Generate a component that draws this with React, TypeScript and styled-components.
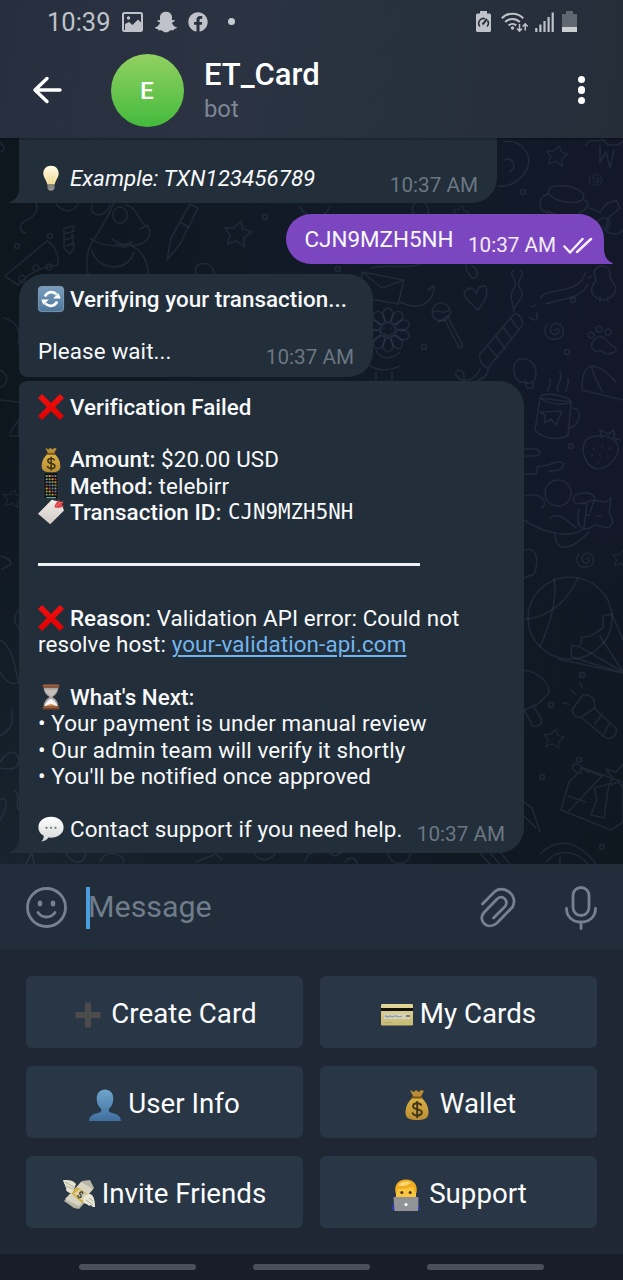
import React from "react";
import styled, { createGlobalStyle, css } from "styled-components";
import { FaSnapchatGhost, FaFacebook } from "react-icons/fa";

const Global = createGlobalStyle`
  * { box-sizing: border-box; }
  body { margin: 0; background: #1e2733; font-family: Roboto, "Liberation Sans", sans-serif; }
`;

const Screen = styled.div`
  width: 623px;
  height: 1280px;
  display: flex;
  flex-direction: column;
  overflow: hidden;
  color: #f7f9fb;
`;

/* ---------- header ---------- */

const Header = styled.header`
  height: 138px;
  flex: none;
  background: linear-gradient(100deg, #272f3e 0%, #2b3342 35%, #27313d 65%, #252d39 100%);
  box-shadow: 0 1px 2px rgba(0, 0, 0, 0.35);
  position: relative;
  z-index: 2;
`;

const StatusBar = styled.div`
  height: 42px;
  padding: 1px 46px 0 47px;
  display: flex;
  align-items: center;
  justify-content: space-between;
  color: #bfc3c9;
`;

const StatusGroup = styled.div<{ $gap: number }>`
  display: flex;
  align-items: center;
  gap: ${(p) => p.$gap}px;
  height: 40px;
`;

const Clock = styled.span`
  font-size: 25.5px;
  line-height: 40px;
`;

const StatusDot = styled.i`
  width: 7px;
  height: 7px;
  margin-left: 8px;
  border-radius: 50%;
  background: #c6c9ce;
`;

const TitleBar = styled.div`
  height: 96px;
  padding: 0 38px 0 32px;
  display: flex;
  align-items: center;
`;

const Avatar = styled.div`
  width: 73px;
  height: 73px;
  margin: 0 20.5px 0 48.5px;
  border-radius: 50%;
  background: linear-gradient(#93d162, #43ba3c);
  display: flex;
  align-items: center;
  justify-content: center;
  font-size: 24.5px;
  font-weight: 500;
  color: #fff;
`;

const TitleText = styled.div`
  flex: 1;
  display: flex;
  flex-direction: column;
  padding-top: 2px;
`;

const Title = styled.div`
  font-size: 31px;
  font-weight: 500;
  line-height: 35px;
  color: #fff;
`;

const Subtitle = styled.div`
  font-size: 23.8px;
  line-height: 34px;
  color: #7b8794;
`;

const MenuDots = styled.div`
  display: flex;
  flex-direction: column;
  gap: 3.5px;
  i { width: 7.2px; height: 7.2px; border-radius: 50%; background: #fff; }
`;

/* ---------- chat ---------- */

const Chat = styled.main`
  height: 726px;
  flex: none;
  position: relative;
  overflow: hidden;
  display: flex;
  flex-direction: column;
  align-items: flex-start;
  padding-left: 19px;
  background:
    radial-gradient(circle at 0% 100%, #17232e 0%, rgba(23, 35, 46, 0) 45%),
    radial-gradient(circle at 100% 100%, #0f181f 0%, rgba(15, 24, 31, 0) 40%),
    linear-gradient(90deg, #0e161e 0%, #111a26 45%, #121828 100%);
`;

const Wallpaper = styled.svg`
  position: absolute;
  inset: 0;
  fill: none;
  stroke: rgba(128, 142, 175, 0.14);
  stroke-width: 1.6;
  stroke-linecap: round;
  stroke-linejoin: round;
`;

const bubble = css`
  position: relative;
  font-size: 22.4px;
  line-height: 26.4px;
  white-space: nowrap;
`;

const Incoming = styled.article<{ $w: number; $h: number; $radius: string; $top?: number; $padTop: number }>`
  ${bubble}
  width: ${(p) => p.$w}px;
  height: ${(p) => p.$h}px;
  margin-top: ${(p) => p.$top ?? 0}px;
  padding: ${(p) => p.$padTop}px 19px 0;
  border-radius: ${(p) => p.$radius};
  background: #222e39;
`;

const Outgoing = styled.article`
  ${bubble}
  align-self: flex-end;
  display: flex;
  width: 318px;
  height: 50px;
  margin: 11px 19px 0 0;
  padding: 11.5px 12px 0 18.5px;
  border-radius: 25px 25px 0 25px;
  background: #7d46c1;
`;

const Tail = styled.svg<{ $side: "left" | "right" }>`
  position: absolute;
  bottom: 0;
  ${(p) => p.$side}: ${(p) => (p.$side === "left" ? -10 : -9)}px;
`;

const Line = styled.div<{ $spacing?: number }>`
  height: 26.4px;
  display: flex;
  align-items: center;
  white-space: pre;
  letter-spacing: ${(p) => p.$spacing ?? 0.11}px;
  b { font-weight: 500; letter-spacing: 0.03px; }
`;

const Blank = styled.div`
  height: 26.4px;
`;

const Italic = styled.em`
  font-style: italic;
  letter-spacing: 0;
`;

const Mono = styled.code`
  font-family: "DejaVu Sans Mono", "Liberation Mono", monospace;
  font-size: 20.8px;
  letter-spacing: 0;
  margin-left: 1px;
`;

const Link = styled.a`
  color: #72b5ee;
  text-decoration: underline;
  text-decoration-thickness: 1.5px;
  text-underline-offset: 3px;
`;

const Rule = styled.div`
  width: 382px;
  height: 3px;
  margin: 11px 0 12.4px;
  background: #eff2f5;
`;

const Stamp = styled.time<{ $bottom?: number }>`
  position: absolute;
  right: 19px;
  bottom: ${(p) => p.$bottom ?? 7}px;
  font-size: 20.7px;
  line-height: 24px;
  color: #6b7783;
`;

const SentStamp = styled.div`
  display: flex;
  align-items: center;
  gap: 7px;
  height: 26px;
  margin: 7px 0 0 14.5px;
  font-size: 20.7px;
  color: #f3ecfa;
`;

const EmojiSlot = styled.span<{ $size: number; $gap: number }>`
  display: inline-flex;
  flex: none;
  width: ${(p) => p.$size}px;
  height: ${(p) => p.$size}px;
  margin-right: ${(p) => p.$gap}px;
  svg { width: 100%; height: 100%; overflow: visible; }
`;

/* ---------- composer & keyboard ---------- */

const Composer = styled.div`
  height: 85px;
  flex: none;
  display: flex;
  align-items: center;
  padding: 2px 26px 0 25px;
  background: #212d3a;
  position: relative;
  z-index: 1;
`;

const Field = styled.div`
  flex: 1;
  margin-left: 18px;
  display: flex;
  align-items: center;
  color: #6f7c8b;
  font-size: 30.4px;
  line-height: 40px;
  span { margin: -2px 0 0 -1.5px; }
`;

const Caret = styled.i`
  width: 3.5px;
  height: 42px;
  background: #4b9fdc;
`;

const Keyboard = styled.div`
  height: 305px;
  flex: none;
  padding: 27px 26px 0;
  display: grid;
  grid-template-columns: 277px 277px;
  grid-auto-rows: 72px;
  gap: 18px 17px;
  background: #1e2733;
`;

const Key = styled.button`
  display: flex;
  align-items: center;
  justify-content: center;
  border: 0;
  padding: 2px 0 0;
  border-radius: 6px;
  background: #293645;
  color: #fafcfd;
  font: 400 27.7px Roboto, "Liberation Sans", sans-serif;
  ${EmojiSlot} { margin-top: 3px; }
`;

const NavBar = styled.div`
  flex: 1;
  display: flex;
  justify-content: center;
  align-items: center;
  gap: 57px;
  background: #171e28;
  i { width: 117px; height: 6px; border-radius: 3px; background: #49505a; }
`;

/* ---------- emoji drawings ---------- */

type EmojiName =
  | "bulb" | "refresh" | "cross" | "bag" | "phone" | "label" | "hourglass"
  | "speech" | "plus" | "card" | "user" | "wings" | "coder";

const drawings: Record<EmojiName, React.ReactNode> = {
  bulb: (
    <>
      <path d="M16 1c-6 0-9.500 4.300-9.500 9.500 0 4.500 3.500 7.500 5 13.500h9c1.500-6 5-9 5-13.500C25.500 5.300 22 1 16 1z" fill="url(#bulbG)" />
      <path d="M14.500 23l-1-10M17.500 23l1-10" stroke="#ecd88e" strokeWidth="0.800" fill="none" />
      <path d="M11.800 24h8.400v5l-2 2.500h-4.400l-2-2.500z" fill="#9b9a91" />
      <path d="M12 25.500h8M12 28h8" stroke="#6b6c66" strokeWidth="1" />
    </>
  ),
  refresh: (
    <>
      <rect x="0.500" y="0.500" width="31" height="31" rx="4" fill="url(#blueG)" stroke="#8da7bd" strokeWidth="1" />
      <path d="M8.500 13A8.600 8.600 0 0 1 23 10.500" stroke="#fff" strokeWidth="3.200" fill="none" />
      <path d="M23.500 19A8.600 8.600 0 0 1 9 21.500" stroke="#fff" strokeWidth="3.200" fill="none" />
      <path d="M28 15.500h-9.500l7-6.500zM4 16.500h9.500l-7 6.500z" fill="#fff" />
    </>
  ),
  cross: <path d="M0 5L5 0l11 11L27 0l5 5-11 11 11 11-5 5-11-11L5 32l-5-5 11-11z" fill="url(#redG)" />,
  bag: (
    <>
      <path d="M9 1l4 2 2-2 3 2 2-2 3 1-4 7h-6z" fill="#b98e34" />
      <path d="M12.500 8h7c5 4 8 9 8 15 0 6-3 8-11.500 8S4.500 29 4.500 23c0-6 3-11 8-15z" fill="url(#goldG)" />
      <path d="M11.500 8.500h9" stroke="#7b551a" strokeWidth="2.200" strokeLinecap="round" />
      <path d="M20.500 16.500c-.8-1.600-2.200-2.300-4.300-2.300-2.500 0-4.100 1.200-4.100 3.100 0 4.300 8.700 1.900 8.700 6 0 2-1.800 3.200-4.500 3.200-2.500 0-4.300-1-4.900-3M16.200 12v17" stroke="#3d3316" strokeWidth="1.900" fill="none" />
    </>
  ),
  phone: (
    <>
      <rect x="7.500" y="0" width="17" height="32" rx="2" fill="#07090a" stroke="#3d4446" strokeWidth="0.800" />
      {[0, 1, 2, 3, 4, 5, 6].map((r) =>
        [0, 1, 2, 3].map((c) => (
          <rect key={`${r}${c}`} x={9.4 + c * 3.6} y={2.6 + r * 3.8} width="2.600" height="2.400" rx="0.500"
            fill={["#7da04b", "#527da4", "#c79a4a", "#8b8f94", "#a8513c"][(r * 3 + c * 2) % 5]} />
        ))
      )}
      <path d="M10 30.300h12" stroke="#4fb3ab" strokeWidth="1.500" />
    </>
  ),
  label: (
    <>
      <path d="M17 1l11 3 4 10-17 17L0 18z" fill="url(#paperG)" />
      <circle cx="24.500" cy="8" r="3" fill="#b9aca2" />
      <path d="M20 10c1-4 3-6 6-9l1 3 5-1-3 4 3 2c-3 2-8 2-12 1z" fill="#df4548" />
      <path d="M22 9l7-6" stroke="#f08b8a" strokeWidth="1" />
    </>
  ),
  hourglass: (
    <>
      <path d="M7 4h18c0 6-3 9-7 12 4 3 7 6 7 12H7c0-6 3-9 7-12-4-3-7-6-7-12z" fill="#a9a6a3" />
      <path d="M8.500 7h15c-1.300 4-4.300 6-7.500 8.300C12.800 13 9.800 11 8.500 7z" fill="#c9bfba" />
      <path d="M16 18c3.500 2 7 5 7.500 9h-15c.5-4 4-7 7.500-9z" fill="#f8f6f4" />
      <path d="M11 26l5-1.500 5 1.500 2 2H9z" fill="#c98b53" />
      <rect x="5.500" y="0.500" width="21" height="4" rx="1.500" fill="#854c32" />
      <rect x="5.500" y="27.500" width="21" height="4" rx="1.500" fill="#774128" />
      <path d="M7 1.500h18M7 28.500h18" stroke="#bc7b55" strokeWidth="0.900" />
    </>
  ),
  speech: (
    <>
      <path d="M16 1C7 1 .5 6.300.5 14c0 4.500 2.300 8 6.500 10.300.2 2.700-.8 5.200-3 7.200 4-.5 7-2.500 9-5 10.700 1 18.500-4.500 18.500-12.500C31.500 6.300 25 1 16 1z" fill="url(#whiteG)" />
      <g fill="#73787b"><circle cx="10.500" cy="14.500" r="1.400" /><circle cx="16" cy="14.500" r="1.400" /><circle cx="21.500" cy="14.500" r="1.400" /></g>
    </>
  ),
  plus: <path d="M13 3.500h6v9.500h9.500v6H19v9.500h-6V19H3.500v-6H13z" fill="#4b4b4b" />,
  card: (
    <>
      <rect x="0" y="5" width="32" height="21.500" rx="1.300" fill="url(#cardG)" />
      <rect x="0" y="9" width="32" height="3" fill="#11120d" />
      <rect x="3" y="14.500" width="26" height="5.500" fill="#d6d2b8" />
      <path d="M4 17.500c2-2 2 2 4 0s2 1 4 0 3-1 5 0 3-1 4 0" stroke="#8199b7" strokeWidth="1.200" fill="none" />
      <path d="M25 17h4" stroke="#4a4944" strokeWidth="1.300" />
      <path d="M3 23.500h8" stroke="#b6ad76" strokeWidth="1" />
    </>
  ),
  user: (
    <path d="M16 .5c-5 0-8.300 3.700-8.300 9 0 5 2.300 8.700 4.500 10.500.7 3-1.500 3.500-5.200 4.500C3 25.500.3 27.500 0 32h32c-.3-4.500-3-6.500-7-7.500-3.700-1-5.900-1.500-5.200-4.500 2.200-1.800 4.500-5.500 4.500-10.500 0-5.300-3.300-9-8.300-9z" fill="url(#userG)" />
  ),
  wings: (
    <>
      <path d="M14 8l5-6 8-1 4 8-6 7-9-4z" fill="#b9b6a5" />
      <path d="M1 22l9-9 13 9-7 8-5-1z" fill="#b9b6a5" />
      <path d="M2 20L18 3l12 7-14 17z" fill="#d8d5c3" />
      <path d="M8 14l6-6 12 8-7 8z" fill="#cfae42" />
      <path d="M11 14.500l5-4 8 5-5 6z" fill="#dcd4b4" />
      <text x="17" y="19" fontSize="9.500" fontWeight="700" fill="#44422e" textAnchor="middle" transform="rotate(30 17 16)">$</text>
      <path d="M0 1c6 0 10 0 13 4-1 3-3 7-4 9-4 0-6-2-6-4 1 0 0-1-1-3 1 0-1-2-2-6z" fill="#e4e3d1" />
      <path d="M20 20c3-5 6-6 9-4 2 2 3 7 3 12-2 0-3 0-4-2-1 1-3 1-4-1-2 0-4-1-4-5z" fill="#e9e7d8" />
      <path d="M2 3l9 5M3 7l7 3M23 21l7 5M26 19l4 3" stroke="#aaa995" strokeWidth="0.900" />
    </>
  ),
  coder: (
    <>
      <path d="M2 31c0-5 1-8 6-9h15c5 1 7 4 7 9z" fill="#2b3aae" />
      <path d="M6 12c0-6 4-9 10-9s10 3 10 9v7H6z" fill="#f9c63d" />
      <path d="M5.500 14C4 6 8 .5 16 .5s12 5.500 10.500 13.500l-2-1c0-3-1-4.500-3-5.500-4 2.500-9 3-13 2-1.500 1-1.500 2.500-1.500 4z" fill="#f2ac22" />
      <path d="M8 6.500c3-4 9-5 13-3-3 3-8 4-13 3z" fill="#fbd875" />
      <circle cx="11.800" cy="13.500" r="1.500" fill="#4d3316" /><circle cx="20.200" cy="13.500" r="1.500" fill="#4d3316" />
      <path d="M4.500 18h23a1 1 0 0 1 1 1l-.5 13H4.500L3.500 19a1 1 0 0 1 1-1z" fill="#929397" />
      <circle cx="16" cy="25.500" r="1.600" fill="#fff" />
    </>
  ),
};

const gradients: [string, string, string][] = [
  ["bulbG", "#fffbe6", "#f0dc9a"],
  ["blueG", "#7a9dbd", "#4b779d"],
  ["redG", "#f01010", "#e00000"],
  ["goldG", "#ddb244", "#b98d34"],
  ["paperG", "#f1ece8", "#d2cac5"],
  ["whiteG", "#ffffff", "#d5d6d7"],
  ["cardG", "#e3d79a", "#c7b974"],
  ["userG", "#6ea5cb", "#406f9f"],
];

const Defs = styled.svg`
  position: absolute;
  width: 0;
  height: 0;
`;

const EmojiDefs = () => (
  <Defs>
    <defs>
      {gradients.map(([id, a, b]) => (
        <linearGradient key={id} id={id} x1="0" y1="0" x2="0" y2="1">
          <stop offset="0" stopColor={a} />
          <stop offset="1" stopColor={b} />
        </linearGradient>
      ))}
    </defs>
  </Defs>
);

const Emoji = ({ name, size = 26, gap = 6 }: { name: EmojiName; size?: number; gap?: number }) => (
  <EmojiSlot $size={size} $gap={gap}>
    <svg viewBox="0 0 32 32">{drawings[name]}</svg>
  </EmojiSlot>
);

/* ---------- wallpaper doodles ---------- */

const star = "M0-12l4 7 9 1-6 7 2 9-9-4-8 5 1-9-7-6 9-2z";
const spiral = "M0 0c3-3 6 2 2 4S-6 2-4-3 6-8 8-1 4 10-3 9-12 0-8-6";

const Doodles = () => (
  <Wallpaper width="623" height="726" viewBox="0 138 623 726">
    {[[238, 233, 1], [557, 155, 0.8], [13, 498, 0.7], [554, 738, 0.75], [622, 558, 0.7], [461, 213, 0.6]].map(([x, y, s], i) => (
      <path key={i} d={star} transform={`translate(${x} ${y}) rotate(12) scale(${s})`} />
    ))}
    {[[596, 179, 0.7], [555, 330, 1], [586, 559, 0.9]].map(([x, y, s], i) => (
      <path key={i} d={spiral} transform={`translate(${x} ${y}) scale(${s})`} />
    ))}
    {[[265, 217], [523, 192], [573, 300], [338, 269], [424, 347], [567, 352], [571, 446], [579, 760], [542, 777], [602, 847], [17, 246], [551, 705], [582, 675], [50, 236]].map(([x, y], i) => (
      <circle key={i} cx={x} cy={y} r="2.500" />
    ))}
    {/* dog */}
    <path d="M92 205c-4 12 14 14 18 0M114 203c-6 12-10 22-20 36-10 14-8 34-4 38M90 238c8 8 30 10 42 4M126 205c14 4 10 16 22 22 6 10-4 18-14 18-8 2-16-2-22-6M92 250c4 20 36 24 42 2M132 246c12 6 16 18 16 28M120 207a7 8 0 1 0 .1 0M140 229l8-4M116 244c6 6 14 2 16-2" />
    {/* paint brush */}
    <path d="M190 204l8 4-18 36-13 16 4-22zM180 222l8 5" />
    {/* candy and cheese */}
    <path d="M64 228l10-2-2 8 2 14-4 6-6-6zM64 234l10-3M64 240l10-3M66 246l8-3M5 276l42-35c8 4 12 14 11 24-18 2-30 8-40 20zM36 265a3 3 0 1 0 .1 0M49 264a3 3 0 1 0 .1 0M22 275a3 4 0 1 0 .1 0" />
    <path d="M36 203c4 12-8 16-14 20-4 6 0 10 4 10M56 204c8 10 18 8 22 0M196 274c-4-14 18-14 18 0M4 318c8 2 18 8 14 26M0 152c8 0 2-12-2-8" />
    {/* saucer and plant */}
    <path d="M504 142c14-4 28 10 24 24s-20 22-30 20M504 160c8-4 14 6 6 12M586 145c6-10 10 0 16-6l6 6 10 0 5-4M600 146v16l6-10 4 16 4-18" />
    {/* jar */}
    <ellipse cx="566" cy="194" rx="18" ry="8" transform="rotate(10 566 194)" />
    <path d="M548 194c-8 2-10 10-6 16l6 3v18M584 200c8 4 2 10-4 12v24M548 211c10 6 22 7 34 3M590 208l10 4 6-8 10-4 4 8-12 10-2 12M603 226a12 12 0 0 0 20 4M598 222a6 6 0 1 1 10 6" />
    <path d="M300 207c8 14 24 12 30 0M414 215c-8-18 18-18 14 0M466 264c-2 6 4 10 6 14 8 2 6-10 0-12" />
    {/* envelope */}
    <path d="M362 272l42 8-6 24-38-7zM362 272l20 16 22-8M372 268c10-4 30 0 40-2 10 0 20-10 20-14M400 302c20 10 34 0 34-16l-6 4" />
    {/* flower */}
    {Array.from({ length: 10 }, (_, i) => (
      <ellipse key={i} cx="388" cy="315" rx="5" ry="7" transform={`rotate(${i * 36} 388 330)`} />
    ))}
    <circle cx="388" cy="330" r="7" />
    <path d="M384 328v1M391 328v1M384 333c2 3 6 3 8 0M376 350c4 12 18 8 24 2M370 366c10 6 22 4 30 0M376 372v8M392 372v8" />
    {/* lollipop */}
    <circle cx="441" cy="312" r="9" />
    <path d="M433 312c6-4 10 4 16-2M445 320l14 28 4-2-14-27M438 322l10-6" />
    {/* heart */}
    <path d="M478 310c-8-8-18-14-12-20 6-5 9 1 11 4 0-8 10-12 10-3 0 7-4 13-9 19z" />
    {/* candle */}
    <path d="M480 354l34-40c4-2 10 6 8 12l-34 42c-4 0-10-8-8-14zM488 346l10 12M496 336l10 14M503 327l9 12M511 319l8 11M480 369c-8 16-20 12-24 6-2-6 8-8 8 2 0 12 26 2 24-8M514 270c-8 4 6 10 0 18s0 18 0 24M520 270c8 4-6 10 0 18s-2 14-6 20M540 298c6-10 30-4 42-18l4-8M546 304c16-6 34-4 42-20M532 307l4-2M530 318l5 2M537 313v6" />
    {/* chick */}
    <path d="M594 272c2-8 16-8 16 2-2 4 4 8 6 14-2 14-20 16-24 4-2-8 4-8 4-12zM600 297v5M608 297v5M592 276l-4 2" />
    {/* paw */}
    <path d="M592 348c-2-8 8-14 12-10s6 6 11 10-8 8-12 4-6 3-11-4zM591 332a3 3 0 1 0 .1 0M599 326a3 3 0 1 0 .1 0M608 329a3 3 0 1 0 .1 0" />
    {/* mushroom */}
    <path d="M514 372c-4-18 22-18 22 2 0 8-8 12-11 7-5 4-10-2-11-9zM525 382l2 6h6l1-8M582 388c0-30 16-26 34-6M582 390l41 10M592 366c0 10 8 18 10 26" />
    {/* mug */}
    <path d="M540 398l31 4-3 34c-10 4-24 4-33-6zM540 398c2-8 30-2 31 4-8 4-24 2-31-4zM572 408c12 0 8 20-4 20M540 412l22-1-6 14-5-6-6 4v-8zM548 391c0-6 4-6 2-12M558 391c-4-6 6-8 2-20M566 391c0-6 4-6 2-12" />
    {/* strawberry */}
    <path d="M586 440c8-6 22-6 30 2 8 10-6 26-18 27-14-2-18-20-12-29zM602 438l-2-8 8 4 6-4v8l6 2M594 448v1M602 446v1M610 448v1M592 455v1M600 455v1M608 456v1M598 462v1" />
    {/* cat on a donut */}
    <circle cx="558" cy="493" r="13" />
    <path d="M524 449h12c6 2 4 7-2 7h-10M524 474h12l2-8c12 2 18-8 25-3 2 6-6 8-14 8M524 496c14-4 26 4 18 12M524 520c24 16 50 18 60 8l3-24c-4-4-10 4-14-4 0-8 18-10 22-2l-5 14M584 504l8-4 14 2 5-4-2 14 4 10-4 6-14-3c-12 8-20 4-16-16M555 533c0 20 16 18 34-1M550 518c10-8 20 6 26 10M586 515h4M597 516h4" />
    <path d="M524 550c12-4 16 10 10 24l-10 4M500 555c4 10 10 12 20 8" />
    {/* beach ball */}
    <ellipse cx="570" cy="618" rx="42" ry="41" />
    <path d="M554 579c4 24-6 50-14 68M526 619c28-2 44-24 52-41M612 614l-9 2v12l-12 8-9 1-2 10-8-2-1 10M612 614l11 26M600 636l23 36M582 648l41 24M558 659l65 14M572 657l51 16" />
    {/* mitten and torch */}
    <path d="M524 670c16 2 28 16 24 24l-10 10-14 6M524 710l9 16c6 2 10-4 8-8l-8-12M572 710l10-14c4-3 10 0 12 4l1 8-14 9c-5 2-8-3-9-7zM594 708l22 20c2 6-4 12-10 10l-24-20M602 714l-7 10M610 722l-6 12M582 688l-2-6M569 704l-6-1M575 694l-4-4" />
    {/* gift card */}
    <path d="M569 782l14-14 40 14v40l-12 8-50-20zM569 782l-8 28M580 768l22 8-34 36M568 796l18 6M588 773c-16-20-22 0-6 0M594 788l15-4-5 34-13-3 6-16zM623 764l-7 8-10-3 6 8-2 8 8-3 5 6" />
    <path d="M524 802l8 6 8 24M524 816l12 12M540 854c14-14 34-18 56 10M546 862c10-12 28-14 42 2M560 857v7" />
    {/* left margin */}
    <path d="M10 433l9-14v17h-9M0 370c8 4 10 12 0 18M0 400l19 2M0 556c10 2 14 8 8 10l-6 3M0 640c14 8 14 26 19 44M0 672c8 14 14 12 19 10M19 610c-8 8-4 14 0 18M0 736c16-10 12-18 12-26M0 762c8-12 18-14 19 0-2 8-10 8-19 6M0 800c8-6 8 8 0 20M14 790c8 4 0 16 5 20" />
    {/* lower edge */}
    <path d="M26 864l6-12 2 12M66 853c6 12 18 12 20 0M100 862c6-14 24-8 24 0M196 862l20-8 6 6M254 852c4 10 16 10 22 0M305 862c2-14 22-12 30-6l8-4M345 862c6-8 12-2 12 2M388 853c2 14 22 14 22 0M480 853l10 11M490 853l10 11M500 852l10 12" />
  </Wallpaper>
);

/* ---------- small icons ---------- */

const PictureIcon = () => (
  <svg width="21" height="20" viewBox="0 0 21 20">
    <rect x="1" y="1" width="19" height="18" rx="1.500" fill="none" stroke="currentColor" strokeWidth="2" />
    <path d="M3 16v-4l4-2 3.500 3L16 7.500l3 3V18H3z" fill="currentColor" />
    <circle cx="6.500" cy="6" r="1.700" fill="currentColor" />
  </svg>
);

const BatterySaver = () => (
  <svg width="15" height="21" viewBox="0 0 15 21">
    <path d="M4 0h7v2.500h2.500A1.500 1.500 0 0 1 15 4v15.500a1.500 1.500 0 0 1-1.500 1.500h-12A1.500 1.500 0 0 1 0 19.500V4a1.500 1.500 0 0 1 1.500-1.500H4z" fill="currentColor" />
    <path d="M4 15.500a4.800 4.800 0 0 1 5-7.800M11.500 9.500a4.800 4.800 0 0 1-.5 6" stroke="#2a323e" strokeWidth="1.600" fill="none" />
    <path d="M6.500 13.500L11 8" stroke="#2a323e" strokeWidth="2" />
  </svg>
);

const Wifi = () => (
  <svg width="27" height="20" viewBox="0 0 27 20" fill="none" stroke="currentColor" strokeWidth="2.100">
    <path d="M.8 6.200a15 15 0 0 1 21.400 0M4.200 10a10.300 10.300 0 0 1 14.600 0M7.700 13.500a5.500 5.500 0 0 1 7.500 0" />
    <circle cx="11.500" cy="16" r="1.700" fill="currentColor" stroke="none" />
    <path d="M18.500 12v7M16 16.500l2.500 2.700 2.500-2.700M24.200 18.500V12M21.700 14.500l2.500-2.700 2.500 2.700" strokeWidth="1.500" />
  </svg>
);

const Signal = () => (
  <svg width="19" height="20" viewBox="0 0 19 20" stroke="currentColor" strokeWidth="2.200">
    <path d="M1.300 20v-4M5.400 20v-7.500M9.500 20V9M13.600 20V5M17.700 20V.5" />
  </svg>
);

const Battery = () => (
  <svg width="15" height="21" viewBox="0 0 15 21">
    <path d="M4 0h7v3h4v18H0V3h4z" fill="#606770" />
    <path d="M0 16h15v5H0z" fill="#cbced1" />
  </svg>
);

const BackArrow = () => (
  <svg width="30" height="28" viewBox="0 0 30 28" fill="none" stroke="#fff" strokeWidth="3.400" strokeLinecap="round" strokeLinejoin="round">
    <path d="M28 14H3M15 2.500L3 14l12 11.500" />
  </svg>
);

const DoubleCheck = () => (
  <svg width="30" height="18" viewBox="0 0 30 18" fill="none" stroke="#f6effb" strokeWidth="2.400" strokeLinecap="round" strokeLinejoin="round">
    <path d="M1.500 9.500l5.500 6L19.500 2M14 15l14-13" />
  </svg>
);

const Smile = () => (
  <svg width="43" height="43" viewBox="0 0 43 43" fill="none" stroke="#758190" strokeWidth="2.800" strokeLinecap="round">
    <circle cx="21.500" cy="21.500" r="19" />
    <path d="M13 26.500c4 6 13 6 17 0" />
    <g fill="#758190" stroke="none"><ellipse cx="15" cy="17.500" rx="2.300" ry="2.900" /><ellipse cx="28" cy="17.500" rx="2.300" ry="2.900" /></g>
  </svg>
);

const Clip = () => (
  <svg width="36" height="42" viewBox="0 0 36 42" fill="none" stroke="#758190" strokeWidth="2.800" strokeLinecap="round" strokeLinejoin="round">
    <path d="M2.500 17L14 5.200C23-3.500 39 8 32.500 20L17 36C8 44-3 34 4 25.500L17 12c6-5 12 2 8 7.500L13.500 31" />
  </svg>
);

const Mic = () => (
  <svg width="32" height="44" viewBox="0 0 32 44" fill="none" stroke="#758190" strokeWidth="2.800" strokeLinecap="round">
    <rect x="8" y="1.500" width="16" height="28" rx="8" />
    <path d="M1.500 22.500C1.500 31 8 36 16 36s14.500-5 14.500-13.500M16 36v6.500" />
  </svg>
);

const ComposerIcons = styled.div`
  display: flex;
  align-items: center;
  gap: 49px;
`;

const StatusIcons = styled(StatusGroup)`
  svg + svg + svg { margin-left: -3px; }
  svg + svg + svg + svg { margin-left: -1.5px; }
`;

const LeftTail = () => (
  <Tail $side="left" width="11" height="14" viewBox="0 0 11 14">
    <path d="M11 0H10C10 6 7 11 0 13.200V14H11z" fill="#222e39" />
  </Tail>
);

const keys: { icon: EmojiName; text: string }[] = [
  { icon: "plus", text: "Create Card" },
  { icon: "card", text: "My Cards" },
  { icon: "user", text: "User Info" },
  { icon: "bag", text: "Wallet" },
  { icon: "wings", text: "Invite Friends" },
  { icon: "coder", text: "Support" },
];

export default function App() {
  return (
    <Screen>
      <Global />
      <EmojiDefs />
      <Header>
        <StatusBar>
          <StatusGroup $gap={11.5}>
            <Clock>10:39</Clock>
            <PictureIcon />
            <FaSnapchatGhost size={22} />
            <FaFacebook size={20} />
            <StatusDot />
          </StatusGroup>
          <StatusIcons $gap={10}>
            <BatterySaver />
            <Wifi />
            <Signal />
            <Battery />
          </StatusIcons>
        </StatusBar>
        <TitleBar>
          <BackArrow />
          <Avatar>E</Avatar>
          <TitleText>
            <Title>ET_Card</Title>
            <Subtitle>bot</Subtitle>
          </TitleText>
          <MenuDots><i /><i /><i /></MenuDots>
        </TitleBar>
      </Header>

      <Chat>
        <Doodles />
        <Incoming $w={478} $h={65} $padTop={26.5} $radius="0 0 25px 0">
          <Line><Emoji name="bulb" /><Italic>Example: TXN123456789</Italic></Line>
          <Stamp $bottom={6}>10:37 AM</Stamp>
          <LeftTail />
        </Incoming>

        <Outgoing>
          <Line $spacing={0}>CJN9MZH5NH</Line>
          <SentStamp>10:37 AM<DoubleCheck /></SentStamp>
          <Tail $side="right" width="10" height="16" viewBox="0 0 10 16">
            <path d="M0 0H1C1 8 4 13 10 15.200L9 16H0z" fill="#7d46c1" />
          </Tail>
        </Outgoing>

        <Incoming $w={354} $h={103} $top={10} $padTop={11.6} $radius="25px 25px 25px 8px">
          <Line><Emoji name="refresh" /><b>Verifying your transaction...</b></Line>
          <Blank />
          <Line>Please wait...</Line>
          <Stamp $bottom={8}>10:37 AM</Stamp>
        </Incoming>

        <Incoming $w={505} $h={472} $top={4} $padTop={12.7} $radius="8px 25px 25px 0">
          <Line><Emoji name="cross" /><b>Verification Failed</b></Line>
          <Blank />
          <Line><Emoji name="bag" /><b>Amount:</b> $20.00 USD</Line>
          <Line><Emoji name="phone" /><b>Method:</b> telebirr</Line>
          <Line><Emoji name="label" /><b>Transaction ID: </b><Mono>CJN9MZH5NH</Mono></Line>
          <Blank />
          <Rule />
          <Blank />
          <Line><Emoji name="cross" /><b>Reason:</b> Validation API error: Could not</Line>
          <Line>resolve host: <Link>your-validation-api.com</Link></Line>
          <Blank />
          <Line><Emoji name="hourglass" /><b>What's Next:</b></Line>
          <Line>• Your payment is under manual review</Line>
          <Line>• Our admin team will verify it shortly</Line>
          <Line>• You'll be notified once approved</Line>
          <Blank />
          <Line><Emoji name="speech" />Contact support if you need help.</Line>
          <Stamp>10:37 AM</Stamp>
          <LeftTail />
        </Incoming>
      </Chat>

      <Composer>
        <Smile />
        <Field><Caret /><span>Message</span></Field>
        <ComposerIcons><Clip /><Mic /></ComposerIcons>
      </Composer>

      <Keyboard>
        {keys.map((k) => (
          <Key key={k.text}>
            <Emoji name={k.icon} size={32} gap={7} />
            {k.text}
          </Key>
        ))}
      </Keyboard>

      <NavBar><i /><i /><i /></NavBar>
    </Screen>
  );
}
